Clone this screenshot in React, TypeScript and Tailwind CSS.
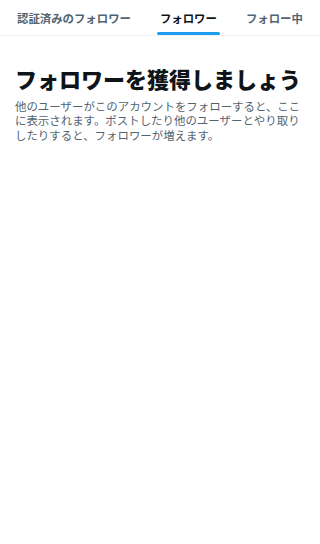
const tabs = [
  { label: '認証済みのフォロワー', active: false },
  { label: 'フォロワー', active: true },
  { label: 'フォロー中', active: false },
];

export default function App() {
  return (
    <div
      className="w-[320px] h-[544px] bg-white overflow-hidden"
      style={{ fontFamily: '"Noto Sans CJK JP", "Noto Sans", sans-serif' }}
    >
      <div className="flex h-[36px] border-b border-[#eff3f4] pl-[2.5px]">
        {tabs.map((t) => (
          <div key={t.label} className="relative flex items-center px-[14.5px] shrink-0">
            <span
              className={`text-[11.4px] leading-[14px] font-bold whitespace-nowrap ${
                t.active ? 'text-[#0f1419]' : 'text-[#536471]'
              }`}
            >
              {t.label}
            </span>
            {t.active && (
              <div className="absolute bottom-0 left-[11.5px] right-[11.5px] h-[3px] rounded-full bg-[#1d9bf0]" />
            )}
          </div>
        ))}
      </div>
      <div className="px-[15px] pt-[28px]">
        <h1 className="text-[22px] leading-[28px] font-extrabold text-[#0f1419] whitespace-nowrap">
          フォロワーを獲得しましょう
        </h1>
        <p className="mt-[7px] text-[11.44px] leading-[14.4px] text-[#536471]">
          他のユーザーがこのアカウントをフォローすると、ここに表示されます。ポストしたり他のユーザーとやり取りしたりすると、フォロワーが増えます。
        </p>
      </div>
    </div>
  );
}
